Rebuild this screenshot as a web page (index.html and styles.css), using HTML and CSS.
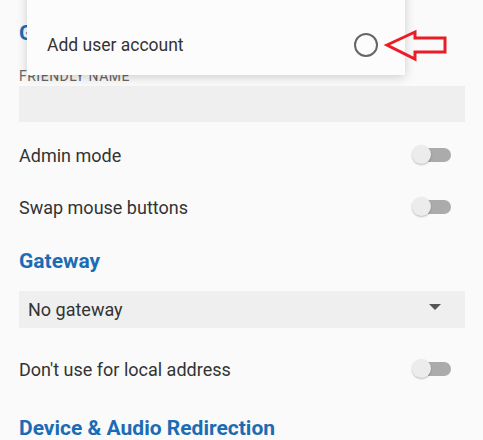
FILE: index.html
```html
<!DOCTYPE html>
<html lang="en">
<head>
<meta charset="UTF-8">
<meta name="viewport" content="width=device-width, initial-scale=1.0">
<title>Connection settings</title>
<link rel="stylesheet" href="styles.css">
</head>
<body>

<div id="settings">
    <h2 class="section-title first">General</h2>
    <div class="field-label">Friendly name</div>
    <div class="text-field"></div>

    <div class="switch-row admin">
        <span>Admin mode</span>
        <span class="switch"><span class="thumb"></span></span>
    </div>
    <div class="switch-row">
        <span>Swap mouse buttons</span>
        <span class="switch"><span class="thumb"></span></span>
    </div>

    <h2 class="section-title gateway">Gateway</h2>
    <div class="dropdown">
        <span>No gateway</span>
        <span class="caret"></span>
    </div>

    <div class="switch-row local">
        <span>Don't use for local address</span>
        <span class="switch"><span class="thumb"></span></span>
    </div>

    <h2 class="section-title device">Device &amp; Audio Redirection</h2>
</div>

<!-- popup menu lying over the form -->
<div id="popup">
    <span>Add user account</span>
    <span class="radio"></span>
</div>

<svg id="arrow" width="70" height="40" viewBox="380 25 70 40">
    <polygon points="387,45 415,32 415,38 445,38 445,52 415,52 415,59" fill="none" stroke="#ea1c24" stroke-width="3" stroke-linejoin="miter"/>
</svg>

</body>
</html>
```

FILE: styles.css
```css
body {
    margin: 0;
    padding: 0;
    background-color: #fafafa;
    font-family: Roboto, "Liberation Sans", sans-serif;
    color: #333333;
    overflow: hidden;
}
#settings {
    padding: 0 18px 0 19px;
    display: flex;
    flex-direction: column;
}
.section-title {
    margin: 0;
    font-size: 21px;
    font-weight: bold;
    line-height: 28px;
    color: #1b6cb4;
}
.section-title.first {
    margin-top: 19px;
}
.section-title.gateway {
    margin-top: 14px;
}
.section-title.device {
    margin-top: 19px;
}
.field-label {
    margin-top: 21px;
    font-size: 14px;
    line-height: 16px;
    letter-spacing: 0.5px;
    text-transform: uppercase;
    color: #666666;
}
.text-field {
    margin-top: 2px;
    height: 36px;
    background-color: #efefef;
}
.switch-row {
    height: 52px;
    display: flex;
    align-items: center;
    justify-content: space-between;
    font-size: 18px;
    padding-right: 14px;
}
.switch-row.admin {
    margin-top: 7px;
}
.switch-row.local {
    margin-top: 15px;
}
.switch {
    position: relative;
    width: 36px;
    height: 14px;
    border-radius: 7px;
    background-color: #ababab;
}
.thumb {
    position: absolute;
    left: -3px;
    top: -3px;
    width: 19px;
    height: 19px;
    border-radius: 50%;
    background-color: #ececec;
    box-shadow: 0 1px 2px rgba(0, 0, 0, 0.25);
}
.dropdown {
    margin-top: 16px;
    height: 37px;
    display: flex;
    align-items: center;
    justify-content: space-between;
    padding: 0 24px 0 9px;
    background-color: #efefef;
    font-size: 18px;
}
.caret {
    width: 0;
    height: 0;
    margin-top: -6px;
    border-left: 6px solid transparent;
    border-right: 6px solid transparent;
    border-top: 6px solid #555555;
}
#popup {
    position: absolute;
    left: 27px;
    top: -20px;
    width: 378px;
    height: 95px;
    box-sizing: border-box;
    padding: 35px 27px 0 20px;
    display: flex;
    align-items: center;
    justify-content: space-between;
    background-color: #fcfcfc;
    box-shadow: 0 2px 10px rgba(0, 0, 0, 0.18);
    font-size: 17.5px;
    color: #333333;
}
.radio {
    width: 20px;
    height: 20px;
    border: 2px solid #666666;
    border-radius: 50%;
}
#arrow {
    position: absolute;
    left: 380px;
    top: 25px;
}
```
